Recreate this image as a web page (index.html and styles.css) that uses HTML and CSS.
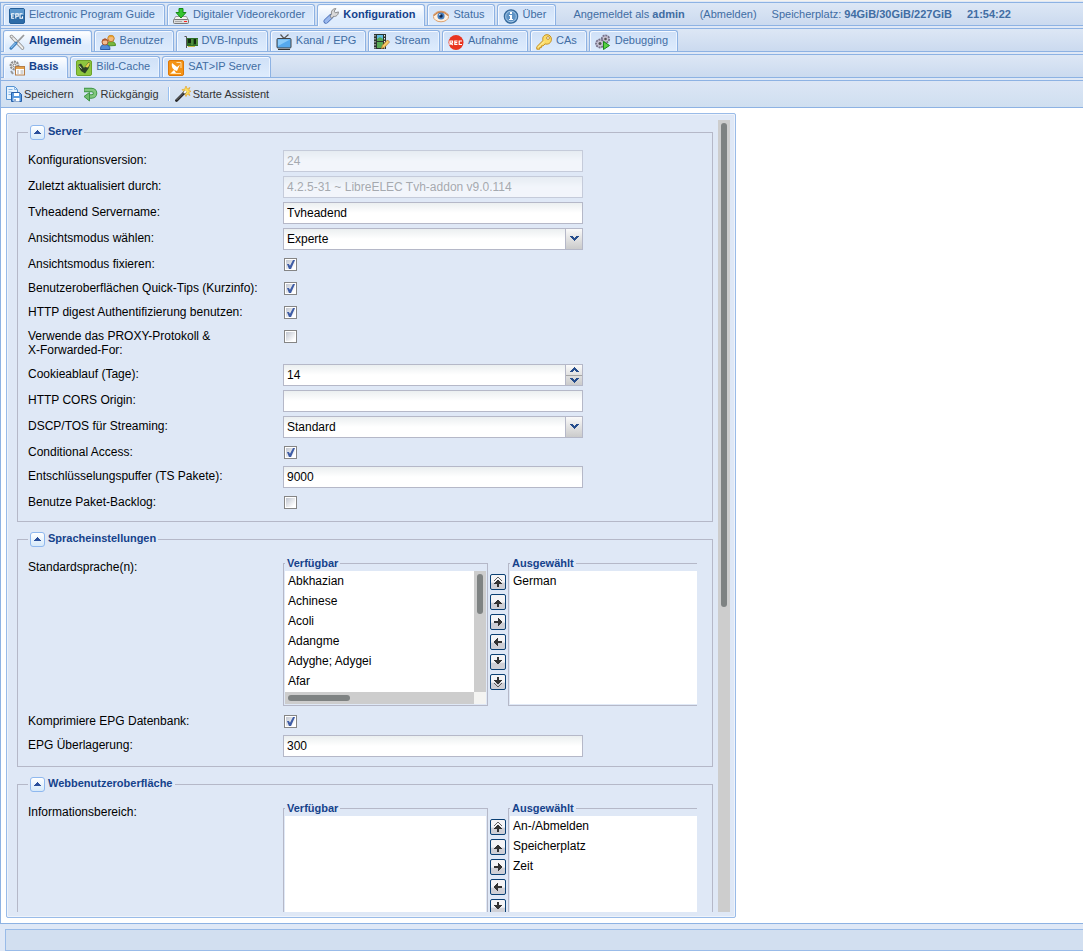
FILE: index.html
```html
<!DOCTYPE html>
<html lang="de">
<head>
<meta charset="utf-8">
<title>Tvheadend</title>
<link rel="stylesheet" href="styles.css">
</head>
<body>
<svg class="defs" aria-hidden="true">
  <symbol id="up" viewBox="0 0 10 10"><path d="M4 3h2v1h1v1h1v1h1v1H6v3H4V7H1V6h1V5h1V4h1z"/></symbol>
  <symbol id="top" viewBox="0 0 10 10"><path d="M4 3h2v1h1v1h1v1h1v1H6v3H4V7H1V6h1V5h1V4h1z"/><path d="M1 4V3h1V2h1V1h1V0h2v1h1v1h1v1h1v1H8V3H7V2H6V1H4v1H3v1H2v1z" opacity=".75"/></symbol>
  <symbol id="down" viewBox="0 0 10 10"><path d="M4 7h2V6h1V5h1V4h1V3H6V0H4v3H1v1h1v1h1v1h1z"/></symbol>
  <symbol id="bottom" viewBox="0 0 10 10"><path d="M4 7h2V6h1V5h1V4h1V3H6V0H4v3H1v1h1v1h1v1h1z"/><path d="M1 6v1h1v1h1v1h1v1h2V9h1V8h1V7h1V6H8v1H7v1H6v1H4V8H3V7H2V6z" opacity=".75"/></symbol>
  <symbol id="right" viewBox="0 0 10 10"><path d="M9 4v2H8v1H7v1H6v1H5V6H1V4h4V1h1v1h1v1h1v1z"/></symbol>
  <symbol id="left" viewBox="0 0 10 10"><path d="M1 4v2h1v1h1v1h1v1h1V6h4V4H5V1H4v1H3v1H2v1z"/></symbol>
  <symbol id="toggle" viewBox="0 0 7 4"><path d="M3 0h1v1h1v1h1v1h1v1H0V3h1V2h1V1h1z"/></symbol>
  <symbol id="chev" viewBox="0 0 9 5"><path d="M0 0h3v1h1v1h1V1h1V0h3v1H8v1H7v1H6v1H5v1H4V4H3V3H2V2H1V1H0z"/></symbol>
  <symbol id="chevup" viewBox="0 0 9 5"><path d="M0 5h3V4h1V3h1v1h1v1h3V4H8V3H7V2H6V1H5V0H4v1H3v1H2v1H1v1H0z"/></symbol>
</svg>

<main class="viewport">
  <nav class="strip">
    <button class="tab"><svg class="icon" viewBox="0 0 16 16"><rect x=".5" y=".5" width="15" height="15" rx="1.5" fill="#2d6ca8" stroke="#255f98"/><path d="M1 1h14v6H1z" fill="#5b96cb"/><path d="M5.4 5.8H2.7v4.5h2.5M2.7 8h2.2M6.8 10.500V5.800H9.200V8.300H6.800M13.600 5.800H11v4.500h2.500V8.300" fill="none" stroke="#fff" stroke-width="1.100"/></svg>Electronic Program Guide</button>
    <button class="tab"><svg class="icon" viewBox="0 0 16 16"><path d="M2.500 8.500h11l2 4H.5z" fill="#f3f3f3" stroke="#999"/><rect x=".5" y="11.500" width="15" height="4" rx="1" fill="#ddd" stroke="#777"/><path d="M2 13.500h7" stroke="#aaa"/><path d="M11 13h3v1h-3z" fill="#f22"/><path d="M6 .5h4v4h3L8 10 3 4.500h3z" fill="#35c52f" stroke="#178a18"/></svg>Digitaler Videorekorder</button>
    <button class="tab active"><svg class="icon" viewBox="0 0 16 16"><path d="M8 8.500l-5 4.700" stroke="#4c6fb6" stroke-width="5" stroke-linecap="round"/><path d="M8 8.500l-5 4.700" stroke="#9bb9ee" stroke-width="3.400" stroke-linecap="round"/><path d="M7 8l1.500-2c-.6-3 1.200-5.400 4.400-5.400l-1.700 2.500 1.100 1.700 3.100-.9c.1 3-2.300 5-5 4.500l-1.800 2z" fill="#d9d9d9" stroke="#777" stroke-width=".8"/></svg>Konfiguration</button>
    <button class="tab"><svg class="icon" viewBox="0 0 16 16"><ellipse cx="8" cy="8.500" rx="7.600" ry="5.300" fill="#fff0df" stroke="#dca06e"/><path d="M.8 7.500Q8 .5 15.200 7.500" fill="none" stroke="#c9824b" stroke-width="1.200"/><circle cx="8" cy="8" r="3.600" fill="#467fc0"/><circle cx="8" cy="8" r="1.700" fill="#11264a"/><circle cx="6.800" cy="6.800" r=".8" fill="#fff"/></svg>Status</button>
    <button class="tab"><svg class="icon" viewBox="0 0 16 16"><circle cx="8" cy="8.500" r="6.700" fill="#5e93c5" stroke="#386b9c" stroke-width="1.200"/><circle cx="8" cy="8.500" r="5.300" fill="none" stroke="#b4d1ea" stroke-width=".8"/><path d="M7 4h2v2H7zM6 7h3v4h1v1H6v-1h1V8H6z" fill="#fff"/></svg>Über</button>
    <div class="session">
      <span>Angemeldet als <b>admin</b></span>
      <a href="#logout">(Abmelden)</a>
      <span>Speicherplatz: <b>94GiB/30GiB/227GiB</b></span>
      <b>21:54:22</b>
    </div>
  </nav>

  <nav class="strip">
    <button class="tab active"><svg class="icon" viewBox="0 0 16 16"><path d="M2.500 2.500L13.500 14" stroke="#888" stroke-width="3.400" stroke-linecap="round"/><path d="M2.500 2.500L13.500 14" stroke="#eee" stroke-width="2" stroke-linecap="round"/><path d="M.8 2.500l2.300 1.700L4.500 3 3 .8" fill="none" stroke="#aaa"/><path d="M15 1L7.500 8.800" stroke="#999" stroke-width="1.800"/><path d="M6.800 9.200L2 14.200" stroke="#3d7fbd" stroke-width="3" stroke-linecap="round"/><path d="M6.500 9.200L2 13.800" stroke="#8dc0ee" stroke-width="1.200"/></svg>Allgemein</button>
    <button class="tab"><svg class="icon" viewBox="0 0 16 16"><path d="M6.500 12c0-3 1.500-4.500 4.500-4.500s4.500 1.500 4.500 4z" fill="#78b63b" stroke="#4f8f25"/><circle cx="11" cy="4.500" r="3.200" fill="#f4b878" stroke="#b97828"/><path d="M7.800 4c.4-3.800 6-3.800 6.400 0-1.500-1.500-4-1.500-6.400 0z" fill="#e5a12c"/><path d="M.5 15.500c0-3.800 1.500-5 4.500-5s5 1.500 5 5z" fill="#528cd7" stroke="#2b5ba5"/><circle cx="5" cy="8" r="3" fill="#f5bd8f" stroke="#a65c33"/><path d="M1.800 7.500c.4-4 6-4 6.400 0-1.500-1.500-4-1.500-6.400 0z" fill="#b0592e"/></svg>Benutzer</button>
    <button class="tab"><svg class="icon slim" viewBox="0 0 14 16"><path d="M.5 2.500h2V14" fill="none" stroke="#555"/><path d="M3 4h11v8H3z" fill="#2f6f28"/><path d="M4 5h3v4H4zM10 5h2v5h-2z" fill="#12280f"/><path d="M4 12h7v1H4z" fill="#c8b94a"/><path d="M8 5v6M13 5v6" stroke="#72ad55"/></svg>DVB-Inputs</button>
    <button class="tab"><svg class="icon" viewBox="0 0 16 16"><path d="M4.500.5L8 4.500 12.500.5" fill="none" stroke="#555" stroke-width="1.200"/><rect x="1" y="4.500" width="14" height="9.500" rx="1" fill="#56a9ee" stroke="#444"/><path d="M2 5.500h12L2 12z" fill="#8acbfa"/><path d="M2 15.500h12" stroke="#333"/></svg>Kanal / EPG</button>
    <button class="tab"><svg class="icon" viewBox="0 0 16 16"><path d="M0 0h12v15H0z" fill="#2a3430"/><path d="M3 1h6v6H3z" fill="#5fb9e0"/><path d="M3 5l3-2 3 2v2H3zM3 8h6v6H3z" fill="#56a954"/><path d="M1 1v14M10.500 1v14" stroke="#eee" stroke-dasharray="1.500 1.500"/><path d="M7.500 14.500l.8-3L13.500 6l2 2-5.200 5.500z" fill="#f7ce67" stroke="#b8792a" stroke-width=".8"/></svg>Stream</button>
    <button class="tab"><svg class="icon" viewBox="0 0 16 16"><circle cx="8" cy="8.500" r="7.500" fill="#e93420"/><path d="M2 11V7h2.500v2H2.500l2.300 2M9.500 7H6.800v3.500h2.700M6.800 8.700h2.500M14 7h-2.800v3.500H14" fill="none" stroke="#fff" stroke-width="1.200"/></svg>Aufnahme</button>
    <button class="tab"><svg class="icon" viewBox="0 0 16 16"><path d="M7 6.500L.8 12.700v2.500h2.900v-1.600h1.700v-1.700h1.700l2-2c3 1 6.300-1 6.300-4.700C15.400 2.500 13.500.7 11 .7 8 .7 6 3.300 7 6.500z" fill="#fbdc68" stroke="#c58e20"/><circle cx="12" cy="4" r="1.400" fill="#fff" stroke="#b38020" stroke-width=".8"/><path d="M2 13.500l6-6" stroke="#fff2b0"/></svg>CAs</button>
    <button class="tab"><svg class="icon" viewBox="0 0 16 16"><circle cx="10.500" cy="5" r="3.700" fill="#c8c3d4" stroke="#77728a" stroke-width="1.800" stroke-dasharray="2 .8"/><circle cx="10.500" cy="5" r="1.300" fill="#555"/><circle cx="5" cy="9.500" r="4" fill="#c8c3d4" stroke="#77728a" stroke-width="1.800" stroke-dasharray="2 .8"/><circle cx="5" cy="9.500" r="1.500" fill="#555"/><path d="M8.500 7.500l6 4-6 4z" fill="#59d143" stroke="#198a17"/></svg>Debugging</button>
  </nav>

  <nav class="strip">
    <button class="tab active"><svg class="icon" viewBox="0 0 16 16"><circle cx="5.500" cy="5.500" r="3.800" fill="#eee" stroke="#8d8d8d" stroke-width="2.200" stroke-dasharray="2 .8"/><circle cx="5.500" cy="5.500" r="1.500" fill="#fff" stroke="#777"/><path d="M2 11l2 3" stroke="#999" stroke-width="2"/><rect x="6.500" y="6.500" width="9" height="8.500" fill="#fff" stroke="#b77d45"/><path d="M7 7h8v2H7z" fill="#e4a34e"/><path d="M8 11h2M8 13h2M11.500 11h3M11.500 13h3" stroke="#aaa"/></svg>Basis</button>
    <button class="tab"><svg class="icon" viewBox="0 0 16 16"><rect x=".5" y=".5" width="15" height="15" rx="1.500" fill="#8dc63f" stroke="#6da32b"/><path d="M2 5l3-1.500L8 8l4.500-6 1.800 1.500-1.800 5L9 13.500 5 11z" fill="#2c4226"/><path d="M9 7l3.500-4.500 1.500 1-2 4z" fill="#e8d34a"/><path d="M3 5.500l2.500 3" stroke="#e7f3d2"/></svg>Bild-Cache</button>
    <button class="tab"><svg class="icon" viewBox="0 0 16 16"><rect x=".5" y=".5" width="15" height="15" rx="1.500" fill="#f49316" stroke="#dd7808"/><path d="M4 3c-1 4 1 7 5 8l3-6.500-3 2.500z" fill="#fff"/><path d="M8.500 2.500H13V8M2.500 13.500H13" fill="none" stroke="#ffe0ae"/><path d="M3 13l3-3 2 3z" fill="#fff"/></svg>SAT&gt;IP Server</button>
  </nav>

  <div class="toolbar">
    <button class="tool"><svg class="icon" viewBox="0 0 16 16"><path d="M.5.5h8l3 3v10H.5z" fill="#e6f3ff" stroke="#5592d2"/><path d="M8.500.5v3h3M2.500 3.500h4M2.500 6h3M2.500 8.500h3" fill="none" stroke="#88b5e3"/><path d="M5.500 6.500h8l2 2v7h-10z" fill="#5a9be0" stroke="#265fa8"/><path d="M8 7h5v3H8zM7.500 12h6v3.500h-6z" fill="#fff"/><path d="M9 13v2" stroke="#265fa8"/></svg>Speichern</button>
    <button class="tool"><svg class="icon" viewBox="0 0 16 16"><path d="M1 4h7.500c4.800 0 4.800 6.500 0 6.500H6" fill="none" stroke="#3d9444" stroke-width="4.400"/><path d="M1.500 4h7c4.800 0 4.800 6.500 0 6.500H6" fill="none" stroke="#82c77d" stroke-width="2.600"/><path d="M6.500 6.500v8.500L1 10.500z" fill="#71bd6d" stroke="#3d9444"/></svg>Rückgängig</button>
    <span class="separator"></span>
    <button class="tool"><svg class="icon" viewBox="0 0 16 16"><path d="M11 0l1.200 3L15 1.500 13.600 4.300l2.400 1-2.400 1.300L15 9.500l-3-1.500-1 2.500L9.800 7.800 7 8l1.800-2.500L7 3.500l2.600-.2z" fill="#ffe15b" stroke="#e3a42c" stroke-width=".7"/><path d="M1.500 14.500L10 6" stroke="#252525" stroke-width="2.800" stroke-linecap="round"/><path d="M1.500 14L9 6.500" stroke="#888" stroke-width=".8"/><path d="M9 7l2-2" stroke="#fff" stroke-width="2.200"/></svg>Starte Assistent</button>
  </div>

  <section class="content">
    <form class="panel">
      <div class="scroller">
        <fieldset class="group">
          <legend class="group-title"><button type="button" class="toggle" aria-label="Server einklappen"><svg class="toggle-mark"><use href="#toggle"/></svg></button>Server</legend>
          <div class="row"><label for="ver">Konfigurationsversion:</label><input class="field" id="ver" value="24" disabled></div>
          <div class="row"><label for="upd">Zuletzt aktualisiert durch:</label><input class="field" id="upd" value="4.2.5-31 ~ LibreELEC Tvh-addon v9.0.114" disabled></div>
          <div class="row"><label for="name">Tvheadend Servername:</label><input class="field" id="name" value="Tvheadend"></div>
          <div class="row"><label for="view">Ansichtsmodus wählen:</label><div class="combo"><select class="field" id="view"><option>Experte</option></select><span class="trigger"><svg class="chev"><use href="#chev"/></svg></span></div></div>
          <div class="row"><label for="fix">Ansichtsmodus fixieren:</label><input class="check" type="checkbox" id="fix" checked></div>
          <div class="row"><label for="tips">Benutzeroberflächen Quick-Tips (Kurzinfo):</label><input class="check" type="checkbox" id="tips" checked></div>
          <div class="row"><label for="digest">HTTP digest Authentifizierung benutzen:</label><input class="check" type="checkbox" id="digest" checked></div>
          <div class="row"><label for="proxy">Verwende das PROXY-Protokoll &amp;<br>X-Forwarded-For:</label><input class="check" type="checkbox" id="proxy"></div>
          <div class="row"><label for="cookie">Cookieablauf (Tage):</label><div class="combo"><input class="field" id="cookie" value="14"><span class="spinner"><button type="button" class="spin" aria-label="Erhöhen"><svg class="chev"><use href="#chevup"/></svg></button><button type="button" class="spin lower" aria-label="Verringern"><svg class="chev"><use href="#chev"/></svg></button></span></div></div>
          <div class="row"><label for="cors">HTTP CORS Origin:</label><input class="field" id="cors"></div>
          <div class="row"><label for="dscp">DSCP/TOS für Streaming:</label><div class="combo"><select class="field" id="dscp"><option>Standard</option></select><span class="trigger"><svg class="chev"><use href="#chev"/></svg></span></div></div>
          <div class="row"><label for="ca">Conditional Access:</label><input class="check" type="checkbox" id="ca" checked></div>
          <div class="row"><label for="buf">Entschlüsselungspuffer (TS Pakete):</label><input class="field" id="buf" value="9000"></div>
          <div class="row"><label for="backlog">Benutze Paket-Backlog:</label><input class="check" type="checkbox" id="backlog"></div>
        </fieldset>

        <fieldset class="group">
          <legend class="group-title"><button type="button" class="toggle" aria-label="Spracheinstellungen einklappen"><svg class="toggle-mark"><use href="#toggle"/></svg></button>Spracheinstellungen</legend>
          <div class="row"><span class="label">Standardsprache(n):</span>
            <div class="picker">
              <fieldset class="box"><legend>Verfügbar</legend>
                <div class="list scrolling">
                  <ul><li>Abkhazian</li><li>Achinese</li><li>Acoli</li><li>Adangme</li><li>Adyghe; Adygei</li><li>Afar</li></ul>
                  <div class="vbar"><div class="vthumb"></div></div>
                  <div class="hbar"><div class="hthumb"></div></div>
                </div>
              </fieldset>
              <div class="movers">
                <button type="button" aria-label="Ganz nach oben"><svg><use href="#top"/></svg></button>
                <button type="button" aria-label="Nach oben"><svg><use href="#up"/></svg></button>
                <button type="button" aria-label="Hinzufügen"><svg><use href="#right"/></svg></button>
                <button type="button" aria-label="Entfernen"><svg><use href="#left"/></svg></button>
                <button type="button" aria-label="Nach unten"><svg><use href="#down"/></svg></button>
                <button type="button" aria-label="Ganz nach unten"><svg><use href="#bottom"/></svg></button>
              </div>
              <fieldset class="box"><legend>Ausgewählt</legend>
                <div class="list"><ul><li>German</li></ul></div>
              </fieldset>
            </div>
          </div>
          <div class="row"><label for="zip">Komprimiere EPG Datenbank:</label><input class="check" type="checkbox" id="zip" checked></div>
          <div class="row"><label for="overlap">EPG Überlagerung:</label><input class="field" id="overlap" value="300"></div>
        </fieldset>

        <fieldset class="group">
          <legend class="group-title"><button type="button" class="toggle" aria-label="Webbenutzeroberfläche einklappen"><svg class="toggle-mark"><use href="#toggle"/></svg></button>Webbenutzeroberfläche</legend>
          <div class="row"><span class="label">Informationsbereich:</span>
            <div class="picker">
              <fieldset class="box"><legend>Verfügbar</legend>
                <div class="list"></div>
              </fieldset>
              <div class="movers">
                <button type="button" aria-label="Ganz nach oben"><svg><use href="#top"/></svg></button>
                <button type="button" aria-label="Nach oben"><svg><use href="#up"/></svg></button>
                <button type="button" aria-label="Hinzufügen"><svg><use href="#right"/></svg></button>
                <button type="button" aria-label="Entfernen"><svg><use href="#left"/></svg></button>
                <button type="button" aria-label="Nach unten"><svg><use href="#down"/></svg></button>
                <button type="button" aria-label="Ganz nach unten"><svg><use href="#bottom"/></svg></button>
              </div>
              <fieldset class="box"><legend>Ausgewählt</legend>
                <div class="list"><ul><li>An-/Abmelden</li><li>Speicherplatz</li><li>Zeit</li></ul></div>
              </fieldset>
            </div>
          </div>
        </fieldset>
      </div>
      <div class="scrollbar"><div class="thumb"></div></div>
    </form>
  </section>
</main>
<footer class="footer"><div class="footer-bar"></div></footer>
</body>
</html>
```
FILE: styles.css
```css
* { box-sizing: border-box; }
html, body { height: 100%; }
body {
  margin: 0;
  padding-top: 2px;
  display: flex;
  flex-direction: column;
  overflow: hidden;
  background: #dfe8f6;
  font: 12px/14px "Liberation Sans", Arial, sans-serif;
  color: #000;
  box-shadow: inset 0 1px #f4f2ee;
}
button { font: inherit; color: inherit; margin: 0; padding: 0; cursor: pointer; }
ul { list-style: none; margin: 0; padding: 0; }
.defs { display: none; }

.viewport {
  flex: 1;
  min-height: 0;
  display: flex;
  flex-direction: column;
  border-left: 1px solid #8db2e3;
  border-bottom: 1px solid #8db2e3;
}

/* Tab strips */
.strip {
  flex: none;
  height: 24px;
  margin-bottom: 2px;
  padding: 1px 2px 0;
  display: flex;
  gap: 2px;
  border: solid #8db2e3;
  border-width: 1px 0;
  background: linear-gradient(#dde7f5, #cbdaef);
  font-size: 11px;
  line-height: 13px;
  color: #416da3;
  white-space: nowrap;
}
.tab {
  display: flex;
  align-items: flex-start;
  height: 21px;
  padding: 3px 9px 0 5px;
  border: 1px solid #8db2e3;
  border-bottom: 0;
  border-radius: 3px 3px 0 0;
  background: linear-gradient(#cfe0f7, #deecfd);
  box-shadow: inset 1px 1px #f5f9ff, inset -1px 0 #eaf3ff;
}
.tab.active {
  height: 22px;
  background: linear-gradient(#fff, #deecfd 70%);
  color: #15428b;
  font-weight: bold;
}
.icon { flex: none; width: 16px; height: 16px; margin-right: 4px; }
.icon.slim { width: 14px; margin: 0 4px 0 2px; }
.session { display: flex; align-self: flex-start; gap: 15px; padding: 4px 0 0 15px; }
.session a { color: inherit; text-decoration: none; }

/* Toolbar */
.toolbar {
  flex: none;
  height: 28px;
  padding: 0 5px;
  display: flex;
  align-items: center;
  gap: 9px;
  border: solid #8db2e3;
  border-width: 1px 0;
  background: linear-gradient(#dce6f5, #cfdff0);
  font-size: 11px;
  color: #333;
}
.tool { display: flex; align-items: center; border: 0; background: none; }
.tool .icon { margin-right: 2px; }
.separator { width: 2px; height: 14px; margin-right: -4px; background: #98c0f0; border-right: 1px solid #fff; }

/* Form panel */
.content { flex: 1; min-height: 0; padding: 5px; display: flex; background: #fff; }
.panel {
  width: 100%;
  max-width: 730px;
  padding: 6px 5px 5px;
  display: flex;
  border: 1px solid #99bbe8;
  border-radius: 2px;
  background: #dfe8f6;
  box-shadow: inset 0 0 0 1px #eef3fb;
}
.scroller { flex: 1; min-width: 0; padding: 5px; overflow: auto; scrollbar-width: none; }
.scrollbar { width: 12px; padding: 3px; background: #cdcdcd; }
.thumb { height: 61.6%; border-radius: 3px; background: #7e8282; }

.group {
  min-width: 0;
  margin: 0 0 10px;
  padding: 10px 10px 5px;
  border: 1px solid #b5b8c8;
}
.group-title, .box legend {
  padding: 0 2px;
  font-size: 11px;
  font-weight: bold;
  color: #15428b;
}
.group-title { display: flex; gap: 3px; height: 15px; line-height: 13px; }
.toggle {
  width: 15px;
  height: 15px;
  display: grid;
  place-items: center;
  padding-bottom: 1px;
  border: 1px solid #8fb8ee;
  border-radius: 3px;
  background: linear-gradient(#fff, #d6e9fa);
}
.toggle-mark { width: 7px; height: 4px; fill: #2a4f9c; shape-rendering: crispEdges; }

.row { display: flex; align-items: flex-start; margin-bottom: 4px; }
.row label, .label { flex: none; width: 255px; padding: 3px 3px 3px 0; }
.field {
  width: 300px;
  height: 22px;
  margin: 0;
  padding: 1px 3px;
  appearance: none;
  border: 1px solid #b5b8c8;
  border-radius: 0;
  background: linear-gradient(#ebeff0, #fff 10px);
  font: inherit;
  color: #000;
}
.field:disabled { opacity: .6; color: #808080; }
.combo { display: flex; position: relative; width: 300px; }
.trigger, .spinner {
  position: absolute;
  top: 1px;
  right: 1px;
  width: 17px;
  height: 20px;
  border-left: 1px solid #b5b8c8;
  background: linear-gradient(#fafafa, #e6e6e6 40%, #cbcbcb);
  pointer-events: none;
}
.trigger { display: grid; place-items: center; padding-bottom: 1px; }
.spinner { display: flex; flex-direction: column; pointer-events: auto; }
.spin { flex: 1; display: grid; place-items: center; border: 0; background: none; }
.spin.lower { border-top: 1px solid #a5a5a5; }
.chev { width: 9px; height: 5px; fill: #264d8c; shape-rendering: crispEdges; }

.check {
  width: 13px;
  height: 13px;
  margin: 4px 1px 3px;
  appearance: none;
  border: 1px solid #858585;
  background: linear-gradient(135deg, #b9bfcb, #fff 80%);
  box-shadow: inset 0 0 0 1px #fff;
}
.check:checked::before {
  content: "";
  display: block;
  width: 11px;
  height: 11px;
  background: #3f5da6;
  clip-path: polygon(18% 45%, 36% 45%, 45% 62%, 73% 10%, 91% 10%, 55% 91%, 36% 91%);
}

/* Two-list picker */
.picker { flex: 1; min-width: 0; height: 150px; display: flex; overflow: hidden; margin-right: 5px; }
.box {
  flex: none;
  width: 205px;
  height: 149px;
  min-width: 0;
  margin: 0;
  padding: 1px;
  border: 1px solid #b5b8c8;
}
.box legend { height: 13px; line-height: 13px; }
.list { height: 133px; background: #fff; }
.list li { height: 20px; padding: 3px; }
.scrolling { display: grid; grid-template: 1fr 12px / 1fr 12px; background: #f4f4f2; }
.scrolling ul { background: #fff; overflow: hidden; }
.vbar, .hbar { padding: 3px; background: #cdcdcd; }
.vthumb { height: 35%; border-radius: 3px; background: #7e8282; }
.hthumb { width: 34%; height: 6px; border-radius: 3px; background: #7e8282; }
.movers { flex: none; width: 20px; padding: 17px 2px 0; display: flex; flex-direction: column; gap: 4px; }
.movers button {
  width: 16px;
  height: 16px;
  display: grid;
  place-items: center;
  border: 1px solid #0a3f73;
  border-radius: 2px;
  background: linear-gradient(#f4f4f6 50%, #cfd0d6 60%);
}
.movers svg { width: 10px; height: 10px; fill: #333; shape-rendering: crispEdges; }

.footer { flex: none; padding: 5px 0 0 5px; }
.footer-bar { height: 22px; border: 1px solid #99bbe8; border-right: 0; background: #d2dff0; }
```
